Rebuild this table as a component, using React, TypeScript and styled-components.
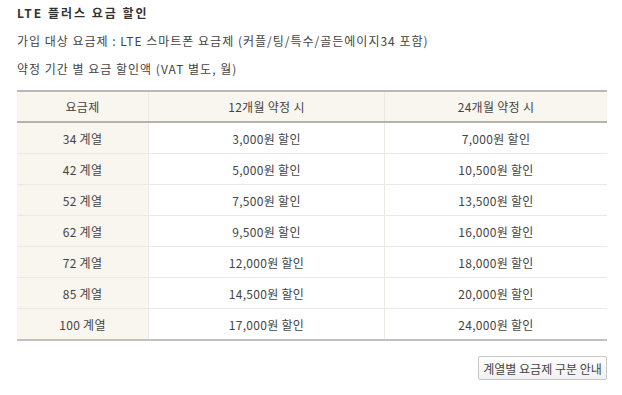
import React from "react";
import styled, { createGlobalStyle } from "styled-components";

const Global = createGlobalStyle`
  html, body { margin: 0; padding: 0; background: #fff; }
  body { font-family: "Noto Sans CJK KR", "Noto Sans", sans-serif; color: #444; }
`;

const Page = styled.div`
  padding: 4px 15px 0 17px;
  width: 590px;
`;

const Title = styled.h2`
  margin: 0;
  font-size: 12px;
  font-weight: bold;
  color: #333;
  line-height: 18px;
  height: 18px;
  letter-spacing: 2px;
`;

const Line = styled.p`
  margin: 10px 0 0 0;
  font-size: 12px;
  line-height: 18px;
  color: #444;
  letter-spacing: 1px;
`;

const Table = styled.table`
  margin-top: 12px;
  width: 590px;
  border-collapse: collapse;
  border-top: 2px solid #bdb8b2;
  border-bottom: 2px solid #c4c1bd;
  font-size: 12px;
  color: #444;
  letter-spacing: 0.3px;
`;

const Th = styled.th<{ $w?: number }>`
  height: 29px;
  padding: 0;
  background: #f9f5ef;
  font-weight: normal;
  text-align: center;
  border-bottom: 2px solid #b5b2ad;
  border-left: 1px solid #ece8e3;
  width: ${p => (p.$w ? `${p.$w}px` : "auto")};
  &:first-child { border-left: none; }
`;

const Td = styled.td<{ $label?: boolean }>`
  height: 30px;
  padding: 0;
  text-align: center;
  background: ${p => (p.$label ? "#f9f5ef" : "#fff")};
  border-top: 1px solid #ece8e6;
  border-left: 1px solid #ece8e3;
  &:first-child { border-left: none; }
`;

const ButtonRow = styled.div`
  display: flex;
  justify-content: flex-end;
  margin-top: 15px;
`;

const Button = styled.button`
  width: 129px;
  height: 24px;
  border: 1px solid #c6c6c6;
  border-radius: 2px;
  background: linear-gradient(#ffffff, #f1f1f1);
  font-family: "Noto Sans CJK KR", sans-serif;
  font-size: 12px;
  color: #444;
  padding: 0;
`;

const rows = [
  ["34 계열", "3,000원 할인", "7,000원 할인"],
  ["42 계열", "5,000원 할인", "10,500원 할인"],
  ["52 계열", "7,500원 할인", "13,500원 할인"],
  ["62 계열", "9,500원 할인", "16,000원 할인"],
  ["72 계열", "12,000원 할인", "18,000원 할인"],
  ["85 계열", "14,500원 할인", "20,000원 할인"],
  ["100 계열", "17,000원 할인", "24,000원 할인"],
];

export default function App() {
  return (
    <>
      <Global />
      <Page>
        <Title>LTE 플러스 요금 할인</Title>
        <Line>가입 대상 요금제 : LTE 스마트폰 요금제 (커플/팅/특수/골든에이지34 포함)</Line>
        <Line>약정 기간 별 요금 할인액 (VAT 별도, 월)</Line>
        <Table>
          <thead>
            <tr>
              <Th $w={131}>요금제</Th>
              <Th $w={235}>12개월 약정 시</Th>
              <Th>24개월 약정 시</Th>
            </tr>
          </thead>
          <tbody>
            {rows.map(r => (
              <tr key={r[0]}>
                <Td $label>{r[0]}</Td>
                <Td>{r[1]}</Td>
                <Td>{r[2]}</Td>
              </tr>
            ))}
          </tbody>
        </Table>
        <ButtonRow>
          <Button>계열별 요금제 구분 안내</Button>
        </ButtonRow>
      </Page>
    </>
  );
}
